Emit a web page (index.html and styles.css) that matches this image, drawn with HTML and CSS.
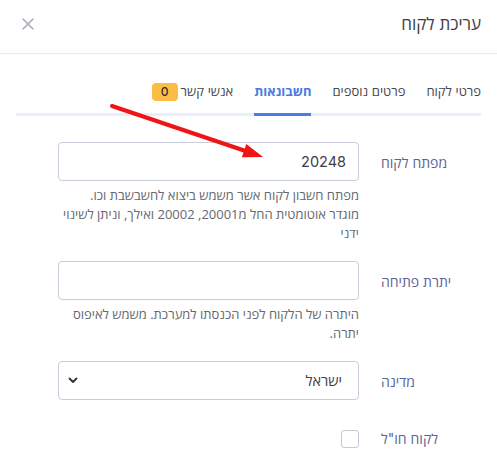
FILE: index.html
```html
<!DOCTYPE html>
<html lang="he" dir="rtl">
<head>
<meta charset="utf-8">
<title>עריכת לקוח</title>
<link rel="stylesheet" href="styles.css">
</head>
<body>
<div class="modal">
  <header class="modal-header">
    <h5 class="modal-title">עריכת לקוח</h5>
    <button class="close" type="button" aria-label="סגור">
      <svg width="12" height="12" viewBox="0 0 12 12"><path d="M1 1L11 11M11 1L1 11" stroke="#a9acb8" stroke-width="1.6" fill="none" stroke-linecap="round"/></svg>
    </button>
  </header>
  <div class="modal-body">
    <nav class="tabs">
      <a class="tab">פרטי לקוח</a>
      <a class="tab">פרטים נוספים</a>
      <a class="tab active">חשבונאות</a>
      <a class="tab">אנשי קשר <span class="badge">0</span></a>
    </nav>
    <form class="form">
      <div class="row">
        <label class="label">מפתח לקוח</label>
        <div class="control">
          <input class="input" type="text" value="20248">
          <p class="help">מפתח חשבון לקוח אשר משמש ביצוא לחשבשבת וכו.<br>מוגדר אוטומטית החל מ20001, 20002 ואילך, וניתן לשינוי ידני</p>
        </div>
      </div>
      <div class="row">
        <label class="label">יתרת פתיחה</label>
        <div class="control">
          <input class="input" type="text" value="">
          <p class="help">היתרה של הלקוח לפני הכנסתו למערכת. משמש לאיפוס יתרה.</p>
        </div>
      </div>
      <div class="row">
        <label class="label">מדינה</label>
        <div class="control">
          <div class="select">
            <span class="select-value">ישראל</span>
            <svg class="chevron" width="10" height="7" viewBox="0 0 10 7"><path d="M1.5 1.5L5 5L8.5 1.5" stroke="#333" stroke-width="1.8" fill="none" stroke-linecap="round" stroke-linejoin="round"/></svg>
          </div>
        </div>
      </div>
      <div class="row row-check">
        <label class="label">לקוח חו"ל</label>
        <div class="control check-wrap">
          <span class="checkbox"></span>
        </div>
      </div>
    </form>
  </div>
  <svg class="annotation" width="497" height="475" viewBox="0 0 497 475">
    <line x1="112" y1="106" x2="247" y2="151.5" stroke="#f01414" stroke-width="4" stroke-linecap="round"/>
    <polygon points="263,157 241.9,157.2 246.3,144" fill="#f01414"/>
  </svg>
</div>
</body>
</html>
```
FILE: styles.css
```css
* { box-sizing: border-box; }
html, body { margin: 0; padding: 0; background: #fff; }
body {
  font-family: "Inter", "Open Sans", "Liberation Sans", Arial, sans-serif;
  color: #444;
  width: 497px;
  height: 475px;
  overflow: hidden;
}
.modal { position: relative; width: 497px; height: 475px; }
.modal-header {
  display: flex;
  align-items: center;
  justify-content: space-between;
  padding: 12px 16px 18px 16px;
  border-bottom: 1px solid #e8eaee;
  height: 54px;
}
.modal-title {
  margin: 0;
  font-size: 17px;
  font-weight: 400;
  line-height: 22px;
  color: #3d3f45;
}
.close {
  border: 0;
  background: none;
  padding: 0;
  margin-left: 6px;
  width: 12px;
  height: 12px;
  display: flex;
}
.modal-body { padding: 16px 16px 0 16px; }
.tabs {
  display: flex;
  gap: 21px;
  border-bottom: 3px solid #e9eefa;
  height: 46px;
}
.tab {
  display: flex;
  align-items: center;
  gap: 3px;
  font-size: 13px;
  line-height: 21px;
  padding: 11px 0;
  color: #45474d;
  height: 46px;
  margin-bottom: -3px;
  border-bottom: 3px solid transparent;
}
.tab.active { color: #4a7be6; font-weight: 700; border-bottom-color: #4a7be6; }
.badge {
  display: inline-flex;
  align-items: center;
  justify-content: center;
  width: 26px;
  height: 18px;
  border-radius: 4px;
  background: #fbbd45;
  color: #2f2f2f;
  font-size: 12px;
  font-weight: 500;
}
.form { padding-top: 26px; }
.row {
  display: grid;
  grid-template-columns: 100px 301px;
  column-gap: 22px;
  margin-bottom: 18px;
}
.label {
  text-align: left;
  font-size: 14px;
  line-height: 41px;
  color: #5c6494;
}
.input, .select {
  display: flex;
  align-items: center;
  width: 301px;
  height: 39px;
  border: 1px solid #c8cdd9;
  border-radius: 4px;
  padding: 0 12px;
  font-family: inherit;
  font-size: 14.5px;
  color: #3f4046;
  background: #fff;
  direction: rtl;
  outline: none;
}
.select { justify-content: space-between; padding: 0 16px 0 9px; }
.select-value { font-size: 14.5px; }
.chevron { display: block; }
.help {
  margin: 5px 0 0 0;
  font-family: "Open Sans", "Liberation Sans", Arial, sans-serif;
  font-size: 13px;
  line-height: 19px;
  color: #666870;
}
.row-check .label { line-height: 38px; }
.check-wrap { display: flex; align-items: center; height: 38px; }
.checkbox {
  width: 18px;
  height: 18px;
  border: 1px solid #c4c9d6;
  border-radius: 3px;
  background: #fff;
}
.annotation { position: absolute; left: 0; top: 0; pointer-events: none; }
```
